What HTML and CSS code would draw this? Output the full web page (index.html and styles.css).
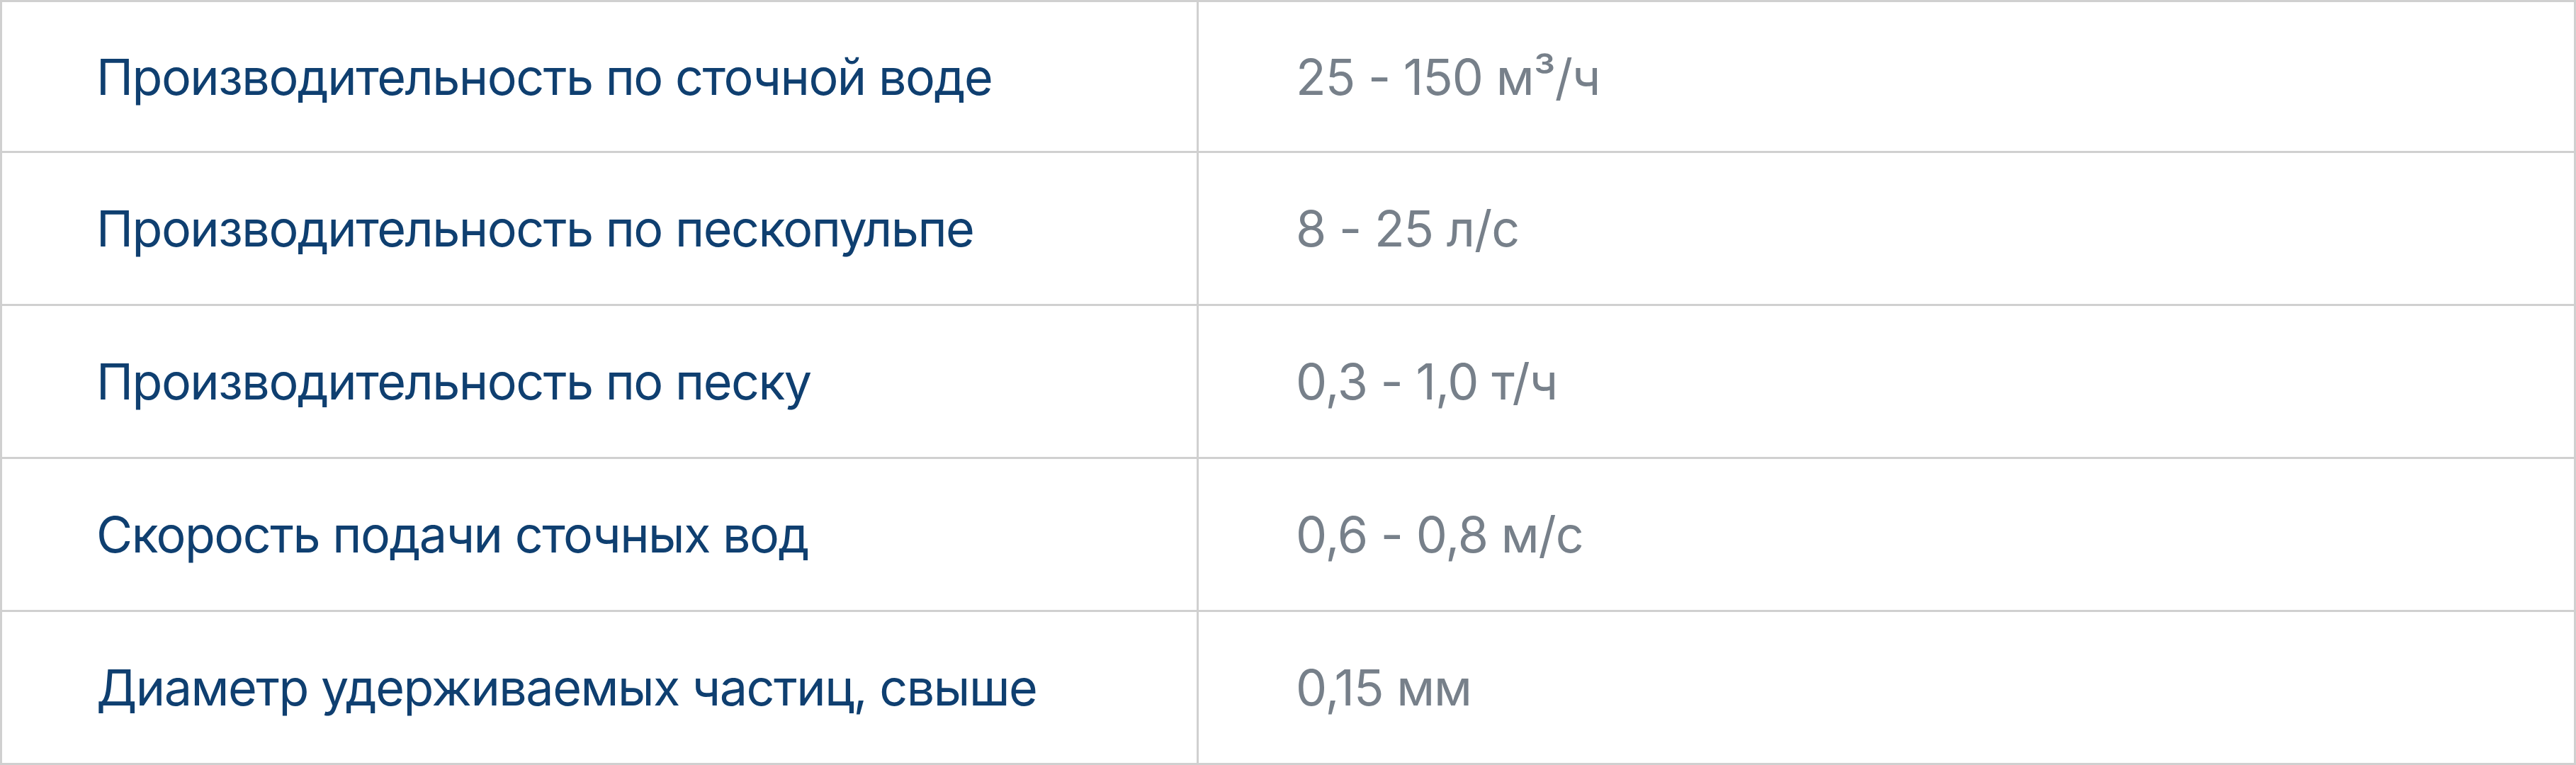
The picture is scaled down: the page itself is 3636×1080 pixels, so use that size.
FILE: index.html
```html
<!DOCTYPE html>
<html lang="ru">
<head>
<meta charset="utf-8">
<link rel="stylesheet" href="styles.css">
</head>
<body>
<div class="spec-table">
  <div class="row">
    <div class="cell name">Производительность по сточной воде</div>
    <div class="cell value">25 - 150 м³/ч</div>
  </div>
  <div class="row">
    <div class="cell name">Производительность по пескопульпе</div>
    <div class="cell value">8 - 25 л/с</div>
  </div>
  <div class="row">
    <div class="cell name">Производительность по песку</div>
    <div class="cell value">0,3 - 1,0 т/ч</div>
  </div>
  <div class="row">
    <div class="cell name">Скорость подачи сточных вод</div>
    <div class="cell value">0,6 - 0,8 м/с</div>
  </div>
  <div class="row">
    <div class="cell name">Диаметр удерживаемых частиц, свыше</div>
    <div class="cell value">0,15 мм</div>
  </div>
</div>
</body>
</html>
```
FILE: styles.css
```css
html, body {
  margin: 0;
  padding: 0;
  background: #ffffff;
}
.spec-table {
  width: 3636px;
  box-sizing: border-box;
  border: 3px solid #d0d0d0;
  font-family: Inter, "Noto Sans", sans-serif;
  font-size: 70px;
}
.row {
  display: grid;
  grid-template-columns: 1686px 1fr;
  height: 213px;
  border-top: 3px solid #d0d0d0;
}
.row:first-child {
  border-top: none;
  height: 210px;
}
.cell {
  display: flex;
  align-items: center;
  white-space: nowrap;
}
.name {
  color: #0f3f70;
  padding-left: 133px;
  letter-spacing: -1.5px;
}
.value {
  color: #77808a;
  border-left: 3px solid #d0d0d0;
  padding-left: 137px;
  letter-spacing: -1px;
}
```
